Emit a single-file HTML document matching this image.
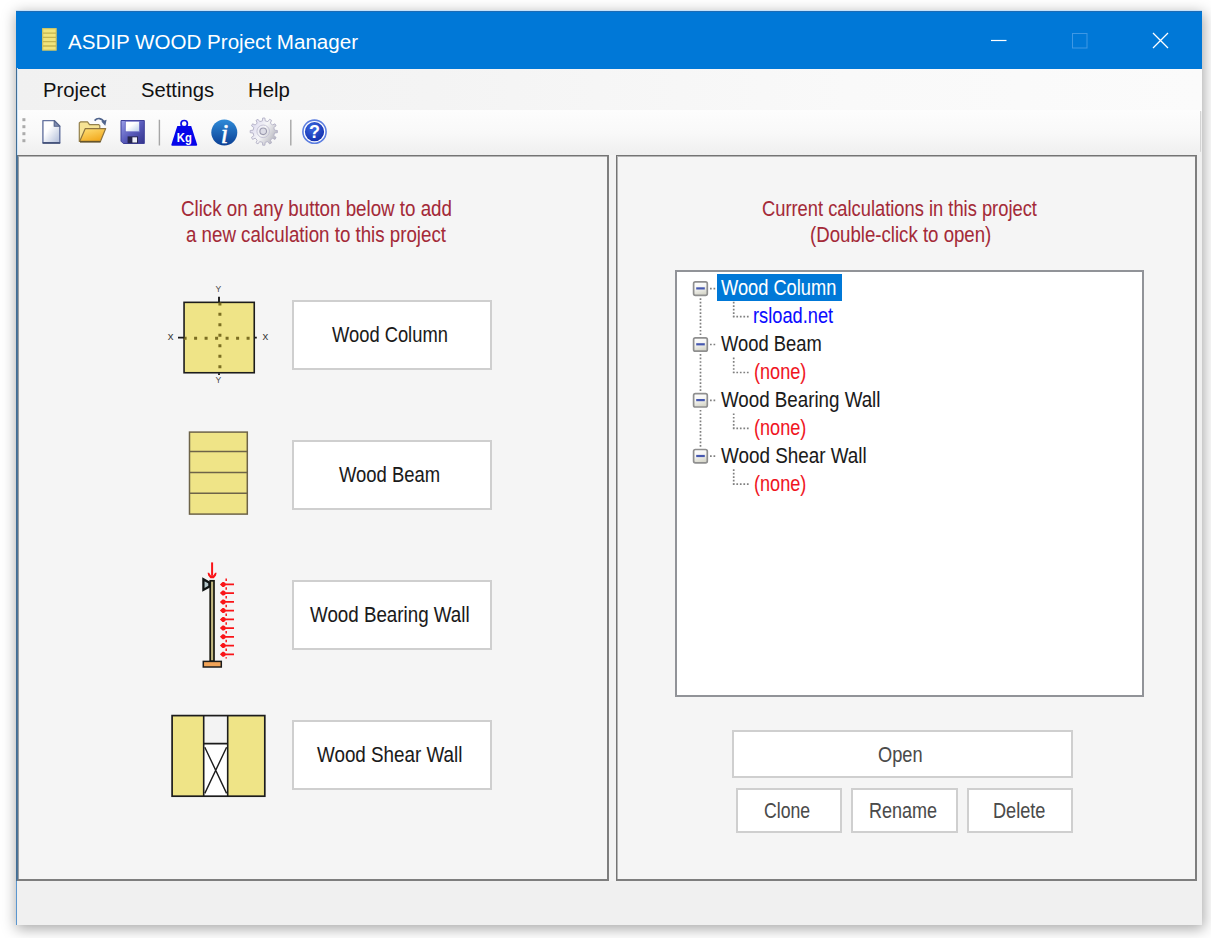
<!DOCTYPE html>
<html lang="en">
<head>
<meta charset="utf-8">
<title>ASDIP WOOD Project Manager</title>
<style>
html,body{margin:0;padding:0;}
body{width:1211px;height:938px;background:#fff;overflow:hidden;position:relative;font-family:"Liberation Sans",sans-serif;}
.abs{position:absolute;}
#win{position:absolute;left:16px;top:11px;width:1186px;height:914px;background:#f3f3f3;box-shadow:1px 3px 13px 1px rgba(0,0,0,0.34);}
#title{position:absolute;left:0;top:0;width:1186px;height:57.5px;background:#0078d7;box-shadow:inset 0 1px 0 #1e6bb3;}
#tl{position:absolute;left:0;top:-1px;width:1186px;height:1px;background:#c4e2fb;}
#menubar{position:absolute;left:0;top:57.5px;width:1186px;height:42px;background:linear-gradient(to right,#f1f1f1 0%,#f4f4f4 35%,#f9f9f9 70%,#fbfbfb 100%);}
#toolbar{position:absolute;left:0;top:99px;width:1186px;height:45px;background:linear-gradient(#fdfdfd 0%,#f9f9f9 50%,#efefef 100%);}
.panel{position:absolute;background:#f5f5f5;border:1px solid #747474;border-right:2px solid #7e7e7e;border-bottom:2px solid #7e7e7e;box-shadow:inset 1px 1px 0 #b4b4b4;box-sizing:border-box;}
#status{position:absolute;left:0;top:870px;width:1186px;height:44px;background:#f0f0f0;}
.t{position:absolute;white-space:pre;transform-origin:0 50%;line-height:1;}
.btn{position:absolute;background:#fff;border:2px solid #cfcfcf;box-sizing:border-box;}
</style>
</head>
<body>
<div id="win">

<div id="tl"></div>
<div id="title">
<svg class="abs" style="left:25.6px;top:17.4px" width="15" height="23" viewBox="0 0 15 23">
<rect x="0.7" y="0.7" width="13.4" height="21.4" fill="#f0e47c" stroke="#d8c95e" stroke-width="1.2"/>
<path d="M1 5.1h13M1 9.4h13M1 13.7h13M1 18h13" stroke="#c4b550" stroke-width="1.3"/>
</svg>
<span class="t" style="left:52.3px;top:22.0px;font-size:19.5px;color:#fff;transform:scaleX(1.055);">ASDIP WOOD Project Manager</span>
<svg class="abs" style="left:960px;top:10px" width="210" height="40" viewBox="0 0 210 40">
<path d="M15 19.5h15.5" stroke="#fff" stroke-width="1.2"/>
<rect x="96.5" y="12.5" width="14.5" height="14.5" fill="none" stroke="#3f98e4" stroke-width="1"/>
<path d="M177 12l15 15M192 12l-15 15" stroke="#fff" stroke-width="1.3"/>
</svg>
</div>
<div id="menubar"></div>
<span class="t" style="left:27.2px;top:69.4px;font-size:20px;color:#111;transform:scaleX(1.012);">Project</span>
<span class="t" style="left:125.0px;top:69.4px;font-size:20px;color:#111;transform:scaleX(1.010);">Settings</span>
<span class="t" style="left:232.2px;top:69.4px;font-size:20px;color:#111;transform:scaleX(1.018);">Help</span>
<div id="toolbar"></div>
<div class="abs" style="left:1184px;top:100px;width:2px;height:41px;background:linear-gradient(to right,#d4d4d4 50%,#efefef 50%);border-radius:0 2px 3px 0"></div>
<svg class="abs" style="left:0px;top:99px" width="340" height="45" viewBox="16 110 340 45" font-family="Liberation Sans, sans-serif">
<defs>
<linearGradient id="gdoc" x1="0" y1="0" x2="1" y2="1"><stop offset="0.35" stop-color="#ffffff"/><stop offset="1" stop-color="#aebbd8"/></linearGradient>
<linearGradient id="gfl" x1="0" y1="0" x2="0.6" y2="1"><stop offset="0" stop-color="#ffe27a"/><stop offset="1" stop-color="#f2a91e"/></linearGradient>
<linearGradient id="gsv" x1="0" y1="0" x2="1" y2="1"><stop offset="0" stop-color="#9a9fe8"/><stop offset="0.5" stop-color="#5a5cbc"/><stop offset="1" stop-color="#34348c"/></linearGradient>
<linearGradient id="glb" x1="0" y1="0" x2="1" y2="1"><stop offset="0.4" stop-color="#ffffff"/><stop offset="1" stop-color="#b9cdea"/></linearGradient>
<linearGradient id="ginf" x1="0" y1="0" x2="0" y2="1"><stop offset="0" stop-color="#2f8bd8"/><stop offset="1" stop-color="#0b3f94"/></linearGradient>
<radialGradient id="ghlp" cx="0.4" cy="0.3" r="0.8"><stop offset="0" stop-color="#3b68e0"/><stop offset="1" stop-color="#0f2aa8"/></radialGradient>
<linearGradient id="ggear" x1="0" y1="0" x2="1" y2="0.6"><stop offset="0" stop-color="#d3cfec"/><stop offset="0.55" stop-color="#f6f6f8"/><stop offset="1" stop-color="#b9b9c1"/></linearGradient>
</defs>
<!-- grip -->
<g fill="#ababab"><rect x="22.4" y="118.2" width="3" height="3"/><rect x="22.4" y="125.2" width="3" height="3"/><rect x="22.4" y="132.2" width="3" height="3"/><rect x="22.4" y="139.2" width="3" height="3"/></g>
<!-- new -->
<path d="M42.9 120.6h11.3l5.6 5.6v16.6h-16.9z" fill="url(#gdoc)" stroke="#6674a0" stroke-width="1.4" stroke-linejoin="round"/>
<path d="M54.2 120.6v5.6h5.6z" fill="#7f8db3" stroke="#56648a" stroke-width="1.1" stroke-linejoin="round"/>
<path d="M42.6 143h17.6" stroke="#3c4a70" stroke-width="1.5"/>
<!-- open -->
<path d="M79.3 141.4v-18.4l1.2-1.2h7l2 2.8h9.3l1 1v3z" fill="#f6e394" stroke="#93804c" stroke-width="1.2" stroke-linejoin="round"/>
<path d="M85.3 128.6h20.4l-5.3 12.8h-20.8z" fill="url(#gfl)" stroke="#8d7440" stroke-width="1.2" stroke-linejoin="round"/>
<path d="M80 141.9h20.6" stroke="#5e4e26" stroke-width="1.4"/>
<path d="M94.6 120.6c2.6-3 7.2-3 9.6 1.6" fill="none" stroke="#50648c" stroke-width="1.7"/>
<path d="M101.3 121.6l5.3-1.8-1.3 6z" fill="#50648c"/>
<!-- save -->
<path d="M121 120.5h23.3v23h-21l-2.3-2.3z" fill="url(#gsv)" stroke="#3f4099" stroke-width="1"/>
<rect x="125.3" y="121.2" width="14.2" height="10.6" fill="url(#glb)" stroke="#6668c2" stroke-width="0.8"/>
<rect x="127.6" y="136.4" width="10.4" height="6.8" fill="#26264e"/>
<rect x="132.4" y="137.3" width="4.6" height="5.2" fill="#eef0fa"/>
<!-- sep -->
<path d="M159.4 119.8v25.6M290.8 119.8v25.6" stroke="#a6a6a6" stroke-width="1.4"/>
<!-- kg -->
<circle cx="184.2" cy="123.7" r="3.2" fill="none" stroke="#0b0be8" stroke-width="1.7"/>
<path d="M177.3 126h13.9l5.9 18.4q0.3 1.3-1 1.3h-23.7q-1.3 0-1-1.3z" fill="#0505ea"/>
<text x="184.3" y="141.7" font-size="12.6" font-weight="bold" fill="#fff" text-anchor="middle" textLength="15" lengthAdjust="spacingAndGlyphs">Kg</text>
<!-- info -->
<circle cx="224.3" cy="132.5" r="13" fill="url(#ginf)"/>
<text x="224.4" y="143.3" font-size="27" font-style="italic" font-family="Liberation Serif, serif" fill="#fff" stroke="#fff" stroke-width="0.5" text-anchor="middle">i</text>
<!-- gear -->
<g transform="translate(263.8 131.6)">
<path d="M10.7 -1.4L13.6 -1.1L13.6 1.1L10.7 1.4L10.0 4.1L12.3 5.8L11.2 7.8L8.6 6.6L6.6 8.6L7.8 11.2L5.8 12.3L4.1 10.0L1.4 10.7L1.1 13.6L-1.1 13.6L-1.4 10.7L-4.1 10.0L-5.8 12.3L-7.8 11.2L-6.6 8.6L-8.6 6.6L-11.2 7.8L-12.3 5.8L-10.0 4.1L-10.7 1.4L-13.6 1.1L-13.6 -1.1L-10.7 -1.4L-10.0 -4.1L-12.3 -5.8L-11.2 -7.8L-8.6 -6.6L-6.6 -8.6L-7.8 -11.2L-5.8 -12.3L-4.1 -10.0L-1.4 -10.7L-1.1 -13.6L1.1 -13.6L1.4 -10.7L4.1 -10.0L5.8 -12.3L7.8 -11.2L6.6 -8.6L8.6 -6.6L11.2 -7.8L12.3 -5.8L10.0 -4.1z" fill="url(#ggear)" stroke="#b3b1c6" stroke-width="0.9" stroke-linejoin="round"/>
<circle cx="-0.6" cy="-0.3" r="6.3" fill="none" stroke="#c6c4d6" stroke-width="1"/>
<circle cx="-0.6" cy="-0.3" r="3.3" fill="#dcdce6" stroke="#9a99ad" stroke-width="1.1"/>
</g>
<!-- help -->
<circle cx="314.5" cy="131.7" r="11.6" fill="#ffffff" stroke="#5c7ee0" stroke-width="1.6"/>
<circle cx="314.5" cy="131.7" r="9.6" fill="url(#ghlp)"/>
<text x="314.6" y="138.3" font-size="18" font-weight="bold" fill="#fff" text-anchor="middle">?</text>
</svg>

<div id="status"></div>
<div class="abs" style="left:1181px;top:144px;width:5px;height:727px;background:#f0f0f0"></div>
<div class="panel" id="lp" style="left:1px;top:144px;width:592px;height:726px;border-left-color:#4f7496;box-shadow:inset 1px 0 0 #9aa0a6,inset 0 1px 0 #b4b4b4"></div>
<div class="abs" style="left:0;top:57px;width:1px;height:813px;background:#416d94"></div>
<div class="abs" style="left:1px;top:57px;width:1px;height:87px;background:#cfe6fb"></div>
<div class="abs" style="left:0;top:870px;width:1px;height:44px;background:#5a96cf"></div>
<div class="panel" id="rp" style="left:600px;top:144px;width:581px;height:726px;"></div>
<span class="t" style="left:164.7px;top:188.1px;font-size:21.5px;color:#a42a38;transform:scaleX(0.872);-webkit-text-stroke:0.07px;">Click on any button below to add</span>
<span class="t" style="left:170.1px;top:214.1px;font-size:21.5px;color:#a42a38;transform:scaleX(0.870);-webkit-text-stroke:0.07px;">a new calculation to this project</span>
<div class="btn" style="left:276px;top:289px;width:199.5px;height:70px"></div>
<span class="t" style="left:315.9px;top:313.7px;font-size:21.5px;color:#1a1a1a;transform:scaleX(0.853);-webkit-text-stroke:0.07px;">Wood Column</span>
<div class="btn" style="left:276px;top:429px;width:199.5px;height:70px"></div>
<span class="t" style="left:323.2px;top:453.7px;font-size:21.5px;color:#1a1a1a;transform:scaleX(0.857);-webkit-text-stroke:0.07px;">Wood Beam</span>
<div class="btn" style="left:276px;top:569px;width:199.5px;height:70px"></div>
<span class="t" style="left:294.1px;top:593.7px;font-size:21.5px;color:#1a1a1a;transform:scaleX(0.873);-webkit-text-stroke:0.07px;">Wood Bearing Wall</span>
<div class="btn" style="left:276px;top:709px;width:199.5px;height:70px"></div>
<span class="t" style="left:301.2px;top:733.7px;font-size:21.5px;color:#1a1a1a;transform:scaleX(0.875);-webkit-text-stroke:0.07px;">Wood Shear Wall</span>
<svg class="abs" style="left:134px;top:259px" width="150" height="560" viewBox="150 270 150 560" font-family="Liberation Sans, sans-serif">
<!-- column -->
<rect x="184.05" y="302.35" width="70.2" height="70.4" fill="#efe487" stroke="#1c1c1c" stroke-width="1.6"/>
<path d="M219.9 302.4v70" stroke="#7b6e22" stroke-width="3" stroke-dasharray="3 7.47" stroke-dashoffset="0" fill="none"/>
<path d="M183.6 338.3h71" stroke="#7b6e22" stroke-width="3" stroke-dasharray="3 7.5" fill="none"/>
<path d="M219 296.8v5.5M178 337.6h6.5M255 337.6h1.8M219 373.3v1.7" stroke="#1c1c1c" stroke-width="1.9" fill="none"/>
<text x="218.3" y="292.3" font-size="8.6" fill="#4a4a4a" text-anchor="middle">Y</text>
<text x="218.3" y="383.2" font-size="8.6" fill="#4a4a4a" text-anchor="middle">Y</text>
<text x="170.6" y="340.3" font-size="11.5" fill="#404040" text-anchor="middle">x</text>
<text x="265.3" y="340.3" font-size="11.5" fill="#404040" text-anchor="middle">x</text>
<!-- beam -->
<rect x="189.5" y="432.1" width="57.8" height="82" fill="#efe487" stroke="#6d6348" stroke-width="1.5"/>
<path d="M189.5 451.6h57.8M189.5 472.4h57.8M189.5 493.3h57.8" stroke="#6d6348" stroke-width="1.5" fill="none"/>
<!-- bearing wall -->
<rect x="210.2" y="580.8" width="3.8" height="80.4" fill="#c2b880" stroke="#17170f" stroke-width="1.7"/>
<rect x="203.3" y="661.4" width="18" height="5.6" fill="#f2a458" stroke="#1c1c1c" stroke-width="1.5"/>
<path d="M203.4 579.3v10.6l6-3.4v-3.8z" fill="#b4c6ca" stroke="#101414" stroke-width="2.3" stroke-linejoin="miter"/>
<g stroke="#fa1418" fill="none">
<path d="M212.1 562.4v13" stroke-width="2"/>
<path d="M226.2 578.6v80" stroke-dasharray="2.5 6.24" stroke-width="1.5"/>
<path d="M221.5 584.4h12.5M221.5 593.1h12.5M221.5 601.9h12.5M221.5 610.6h12.5M221.5 619.4h12.5M221.5 628.1h12.5M221.5 636.8h12.5M221.5 645.6h12.5M221.5 654.3h12.5" stroke-width="1.8"/>
</g>
<g fill="#fa1418">
<path d="M207.6 572.8l1.5 0l1.6 2.4h2.8l1.6-2.4h1.5l-0.6 2.6l-2.2 2.9h-3.4l-2.2-2.9z"/>
<path d="M219.9 584.4l2.6-2.5h1.4l1.6 1.2v2.6l-1.6 1.2h-1.4zM219.9 593.1l2.6-2.5h1.4l1.6 1.2v2.6l-1.6 1.2h-1.4zM219.9 601.9l2.6-2.5h1.4l1.6 1.2v2.6l-1.6 1.2h-1.4zM219.9 610.6l2.6-2.5h1.4l1.6 1.2v2.6l-1.6 1.2h-1.4zM219.9 619.4l2.6-2.5h1.4l1.6 1.2v2.6l-1.6 1.2h-1.4zM219.9 628.1l2.6-2.5h1.4l1.6 1.2v2.6l-1.6 1.2h-1.4zM219.9 636.8l2.6-2.5h1.4l1.6 1.2v2.6l-1.6 1.2h-1.4zM219.9 645.6l2.6-2.5h1.4l1.6 1.2v2.6l-1.6 1.2h-1.4zM219.9 654.3l2.6-2.5h1.4l1.6 1.2v2.6l-1.6 1.2h-1.4z"/>
</g>
<!-- shear wall -->
<rect x="172.1" y="715.6" width="92.7" height="80.6" fill="#efe487"/>
<rect x="203.5" y="715.6" width="24.3" height="28" fill="#f3f3f3"/>
<rect x="203.5" y="743.6" width="24.3" height="52.6" fill="#ffffff"/>
<path d="M204.8 747.2l21.8 46.2M226.6 747.2l-21.8 46.2" stroke="#1c1c1c" stroke-width="1.4" fill="none"/>
<path d="M203.7 715.6v80.6M227.7 715.6v80.6M203.7 743.6h24" stroke="#1c1c1c" stroke-width="1.6" fill="none"/>
<rect x="172.1" y="715.6" width="92.7" height="80.6" fill="none" stroke="#1c1c1c" stroke-width="1.7"/>
</svg>

<span class="t" style="left:746.4px;top:188.1px;font-size:21.5px;color:#a42a38;transform:scaleX(0.852);-webkit-text-stroke:0.07px;">Current calculations in this project</span>
<span class="t" style="left:794.2px;top:214.1px;font-size:21.5px;color:#a42a38;transform:scaleX(0.867);-webkit-text-stroke:0.07px;">(Double-click to open)</span>
<div class="abs" style="left:659px;top:259px;width:469px;height:427px;background:#fff;border:2px solid #919398;box-sizing:border-box"></div>
<div class="abs" style="left:701px;top:263px;width:124.5px;height:27.3px;background:#0078d7"></div>
<span class="t" style="left:705.3px;top:267.0px;font-size:21.5px;color:#fff;transform:scaleX(0.849);-webkit-text-stroke:0.07px;">Wood Column</span>
<span class="t" style="left:737.3px;top:294.9px;font-size:21.5px;color:#0a0aff;transform:scaleX(0.849);-webkit-text-stroke:0.07px;">rsload.net</span>
<span class="t" style="left:705.3px;top:322.9px;font-size:21.5px;color:#1a1a1a;transform:scaleX(0.854);-webkit-text-stroke:0.07px;">Wood Beam</span>
<span class="t" style="left:738.3px;top:350.8px;font-size:21.5px;color:#f0141e;transform:scaleX(0.843);-webkit-text-stroke:0.07px;">(none)</span>
<span class="t" style="left:705.3px;top:378.7px;font-size:21.5px;color:#1a1a1a;transform:scaleX(0.872);-webkit-text-stroke:0.07px;">Wood Bearing Wall</span>
<span class="t" style="left:738.3px;top:406.7px;font-size:21.5px;color:#f0141e;transform:scaleX(0.843);-webkit-text-stroke:0.07px;">(none)</span>
<span class="t" style="left:705.3px;top:434.6px;font-size:21.5px;color:#1a1a1a;transform:scaleX(0.877);-webkit-text-stroke:0.07px;">Wood Shear Wall</span>
<span class="t" style="left:738.3px;top:462.5px;font-size:21.5px;color:#f0141e;transform:scaleX(0.843);-webkit-text-stroke:0.07px;">(none)</span>
<svg class="abs" style="left:664px;top:261px" width="120" height="240" viewBox="680 272 120 240">
<defs><linearGradient id="eg" x1="0" y1="0" x2="0.3" y2="1"><stop offset="0" stop-color="#ffffff"/><stop offset="0.5" stop-color="#f6f6f4"/><stop offset="1" stop-color="#d8d8cc"/></linearGradient></defs>
<path d="M710 288.6h5.3" stroke="#808080" stroke-width="1.7" stroke-dasharray="1.7 1.82" fill="none"/>
<path d="M700.5 298.2v38.3" stroke="#808080" stroke-width="1.7" stroke-dasharray="1.7 1.82" fill="none"/>
<path d="M733.7 301.7v14.9" stroke="#808080" stroke-width="1.7" stroke-dasharray="1.7 1.82" fill="none"/>
<path d="M732.85 316.6h15.8" stroke="#808080" stroke-width="1.7" stroke-dasharray="1.7 1.82" fill="none"/>
<rect x="693.6" y="281.9" width="13.7" height="13.4" rx="1.8" fill="url(#eg)" stroke="#8f8f8f" stroke-width="1.7"/>
<path d="M696.2 288.4h8.6" stroke="#4658b0" stroke-width="2.2" fill="none"/>
<path d="M710 344.5h5.3" stroke="#808080" stroke-width="1.7" stroke-dasharray="1.7 1.82" fill="none"/>
<path d="M700.5 354.1v38.3" stroke="#808080" stroke-width="1.7" stroke-dasharray="1.7 1.82" fill="none"/>
<path d="M733.7 357.6v14.9" stroke="#808080" stroke-width="1.7" stroke-dasharray="1.7 1.82" fill="none"/>
<path d="M732.85 372.5h15.8" stroke="#808080" stroke-width="1.7" stroke-dasharray="1.7 1.82" fill="none"/>
<rect x="693.6" y="337.8" width="13.7" height="13.4" rx="1.8" fill="url(#eg)" stroke="#8f8f8f" stroke-width="1.7"/>
<path d="M696.2 344.3h8.6" stroke="#4658b0" stroke-width="2.2" fill="none"/>
<path d="M710 400.3h5.3" stroke="#808080" stroke-width="1.7" stroke-dasharray="1.7 1.82" fill="none"/>
<path d="M700.5 409.9v38.3" stroke="#808080" stroke-width="1.7" stroke-dasharray="1.7 1.82" fill="none"/>
<path d="M733.7 413.4v14.9" stroke="#808080" stroke-width="1.7" stroke-dasharray="1.7 1.82" fill="none"/>
<path d="M732.85 428.4h15.8" stroke="#808080" stroke-width="1.7" stroke-dasharray="1.7 1.82" fill="none"/>
<rect x="693.6" y="393.6" width="13.7" height="13.4" rx="1.8" fill="url(#eg)" stroke="#8f8f8f" stroke-width="1.7"/>
<path d="M696.2 400.1h8.6" stroke="#4658b0" stroke-width="2.2" fill="none"/>
<path d="M710 456.2h5.3" stroke="#808080" stroke-width="1.7" stroke-dasharray="1.7 1.82" fill="none"/>
<path d="M733.7 469.3v14.9" stroke="#808080" stroke-width="1.7" stroke-dasharray="1.7 1.82" fill="none"/>
<path d="M732.85 484.2h15.8" stroke="#808080" stroke-width="1.7" stroke-dasharray="1.7 1.82" fill="none"/>
<rect x="693.6" y="449.5" width="13.7" height="13.4" rx="1.8" fill="url(#eg)" stroke="#8f8f8f" stroke-width="1.7"/>
<path d="M696.2 456.0h8.6" stroke="#4658b0" stroke-width="2.2" fill="none"/>
</svg>
<div class="btn" style="left:716.0px;top:719.0px;width:341.0px;height:48.0px"></div>
<span class="t" style="left:861.5px;top:734.1px;font-size:21.5px;color:#4a4a4a;transform:scaleX(0.848);-webkit-text-stroke:0.07px;">Open</span>
<div class="btn" style="left:720.0px;top:777.0px;width:106.0px;height:45.0px"></div>
<span class="t" style="left:747.6px;top:790.4px;font-size:21.5px;color:#4a4a4a;transform:scaleX(0.820);-webkit-text-stroke:0.07px;">Clone</span>
<div class="btn" style="left:835.0px;top:777.0px;width:106.5px;height:45.0px"></div>
<span class="t" style="left:852.6px;top:790.4px;font-size:21.5px;color:#4a4a4a;transform:scaleX(0.838);-webkit-text-stroke:0.07px;">Rename</span>
<div class="btn" style="left:951.0px;top:777.0px;width:106.0px;height:45.0px"></div>
<span class="t" style="left:976.5px;top:790.4px;font-size:21.5px;color:#4a4a4a;transform:scaleX(0.843);-webkit-text-stroke:0.07px;">Delete</span>
</div></body></html>
